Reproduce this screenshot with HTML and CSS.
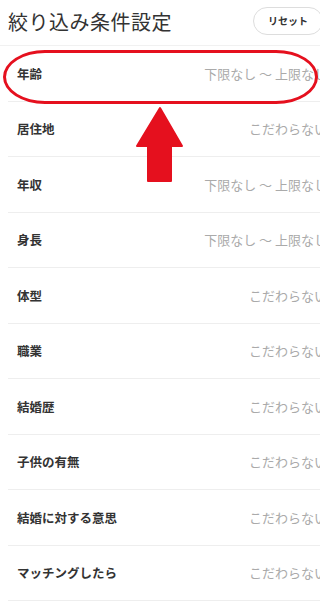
FILE: index.html
```html
<!DOCTYPE html>
<html lang="ja">
<head>
    <meta charset="UTF-8">
    <meta name="viewport" content="width=device-width, initial-scale=1.0">
    <title>絞り込み条件設定</title>
    <link rel="stylesheet" href="styles.css">
</head>
<body>
    <div class="page">
        <div class="header">
            <h1 class="title">絞り込み条件設定</h1>
            <button class="reset-btn">リセット</button>
        </div>

        <ul class="filter-list">
            <li class="filter-row"><span class="label">年齢</span><span class="value">下限なし 〜 上限なし</span></li>
            <li class="filter-row"><span class="label">居住地</span><span class="value">こだわらない</span></li>
            <li class="filter-row"><span class="label">年収</span><span class="value">下限なし 〜 上限なし</span></li>
            <li class="filter-row"><span class="label">身長</span><span class="value">下限なし 〜 上限なし</span></li>
            <li class="filter-row"><span class="label">体型</span><span class="value">こだわらない</span></li>
            <li class="filter-row"><span class="label">職業</span><span class="value">こだわらない</span></li>
            <li class="filter-row"><span class="label">結婚歴</span><span class="value">こだわらない</span></li>
            <li class="filter-row"><span class="label">子供の有無</span><span class="value">こだわらない</span></li>
            <li class="filter-row"><span class="label">結婚に対する意思</span><span class="value">こだわらない</span></li>
            <li class="filter-row"><span class="label">マッチングしたら</span><span class="value">こだわらない</span></li>
        </ul>

        <!-- 注目の枠と矢印 -->
        <div class="highlight"></div>
        <svg class="arrow" width="50" height="78" viewBox="0 0 50 78">
            <polygon points="24,2 46,40 35,40 35,75 12,75 12,40 1,40" fill="#e5101e" stroke="#e5101e" stroke-width="2" stroke-linejoin="round"/>
        </svg>
    </div>
</body>
</html>
```

FILE: styles.css
```css
body {
    margin: 0;
    background: #ffffff;
    font-family: "Noto Sans CJK JP", "Noto Sans", sans-serif;
    color: #333333;
    overflow: hidden;
}

.page {
    position: relative;
    width: 343px;
}

.header {
    display: flex;
    align-items: center;
    justify-content: space-between;
    height: 46px;
    padding: 0 0 0 8px;
    box-sizing: border-box;
    border-bottom: 1px solid #f1f1f1;
}

.title {
    margin: 0;
    font-size: 20px;
    font-weight: normal;
    color: #333333;
    letter-spacing: 0.5px;
    line-height: 1;
    margin-top: -2px;
}

.reset-btn {
    width: 70px;
    height: 28px;
    margin: -4px 20px 0 0;
    border: 1px solid #dddddd;
    border-radius: 14px;
    background: #ffffff;
    font-family: inherit;
    font-size: 10px;
    font-weight: bold;
    color: #333333;
    padding: 0;
}

.filter-list {
    list-style: none;
    margin: 0;
    padding: 0;
}

.filter-row {
    display: flex;
    align-items: center;
    justify-content: space-between;
    height: 55.5px;
    box-sizing: border-box;
    margin-left: 8px;
    padding: 0 16px 0 9px;
    border-bottom: 1.5px solid #eeeeee;
}

.label {
    font-size: 12.5px;
    font-weight: bold;
    color: #333333;
}

.value {
    font-size: 13px;
    color: #aaaaaa;
}

.highlight {
    position: absolute;
    left: 3px;
    top: 50px;
    width: 315px;
    height: 54px;
    box-sizing: border-box;
    border: 3px solid #e5101e;
    border-radius: 42px / 27px;
}

.arrow {
    position: absolute;
    left: 136px;
    top: 106px;
}
```
